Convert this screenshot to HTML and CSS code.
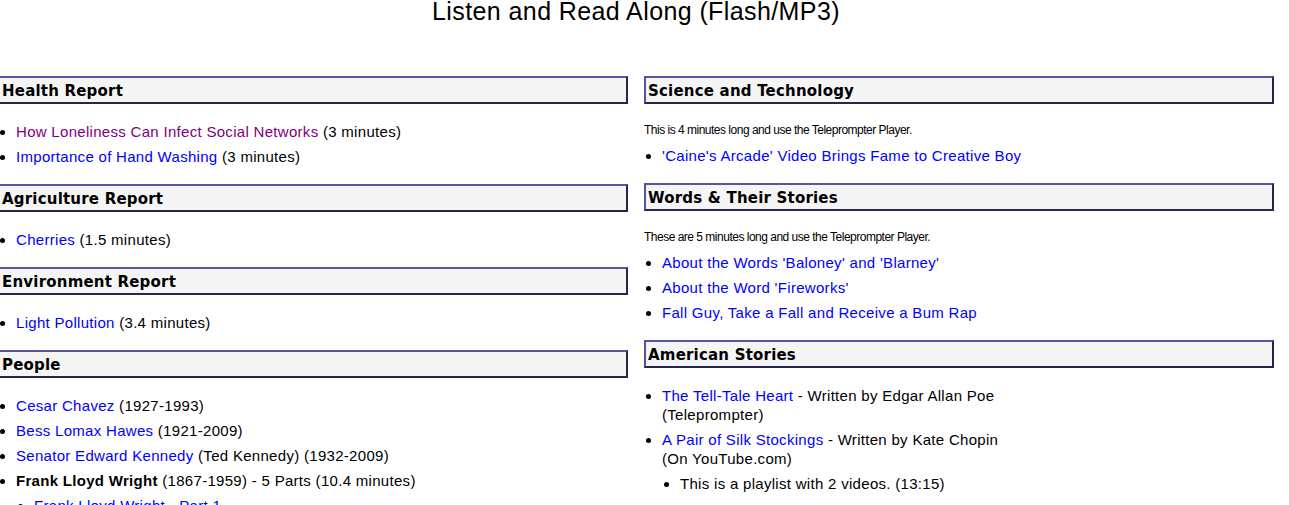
FILE: index.html
```html
<!DOCTYPE html>
<html lang="en">
<head>
<meta charset="utf-8">
<title>Listen and Read Along (Flash/MP3)</title>
<link rel="stylesheet" href="styles.css">
</head>
<body>
<div class="page">
  <h1 class="title">Listen and Read Along (Flash/MP3)</h1>
  <div class="columns">
    <div class="col">
      <h2 class="box">Health Report</h2>
      <ul class="list">
        <li><a class="visited" href="#">How Loneliness Can Infect Social Networks</a> (3 minutes)</li>
        <li><a href="#">Importance of Hand Washing</a> (3 minutes)</li>
      </ul>
      <h2 class="box">Agriculture Report</h2>
      <ul class="list">
        <li><a href="#">Cherries</a> (1.5 minutes)</li>
      </ul>
      <h2 class="box">Environment Report</h2>
      <ul class="list">
        <li><a href="#">Light Pollution</a> (3.4 minutes)</li>
      </ul>
      <h2 class="box">People</h2>
      <ul class="list">
        <li><a href="#">Cesar Chavez</a> (1927-1993)</li>
        <li><a href="#">Bess Lomax Hawes</a> (1921-2009)</li>
        <li><a href="#">Senator Edward Kennedy</a> (Ted Kennedy) (1932-2009)</li>
        <li><strong>Frank Lloyd Wright</strong> (1867-1959) - 5 Parts (10.4 minutes)
          <ul class="sub">
            <li><a href="#">Frank Lloyd Wright - Part 1</a></li>
            <li><a href="#">Frank Lloyd Wright - Part 2</a></li>
          </ul>
        </li>
      </ul>
    </div>
    <div class="col">
      <h2 class="box">Science and Technology</h2>
      <p class="note">This is 4 minutes long and use the Teleprompter Player.</p>
      <ul class="list after-note">
        <li><a href="#">'Caine's Arcade' Video Brings Fame to Creative Boy</a></li>
      </ul>
      <h2 class="box">Words &amp; Their Stories</h2>
      <p class="note">These are 5 minutes long and use the Teleprompter Player.</p>
      <ul class="list after-note">
        <li><a href="#">About the Words 'Baloney' and 'Blarney'</a></li>
        <li><a href="#">About the Word 'Fireworks'</a></li>
        <li><a href="#">Fall Guy, Take a Fall and Receive a Bum Rap</a></li>
      </ul>
      <h2 class="box">American Stories</h2>
      <ul class="list stories">
        <li><a href="#">The Tell-Tale Heart</a> - Written by Edgar Allan Poe (Teleprompter)</li>
        <li><a href="#">A Pair of Silk Stockings</a> - Written by Kate Chopin (On YouTube.com)
          <ul class="sub">
            <li>This is a playlist with 2 videos. (13:15)</li>
          </ul>
        </li>
      </ul>
    </div>
  </div>
</div>
</body>
</html>
```

FILE: styles.css
```css
html, body {
  margin: 0;
  padding: 0;
  background: #ffffff;
}

body {
  font-family: "Liberation Sans", Arial, sans-serif;
  font-size: 15px;
  color: #000000;
  overflow: hidden;
}

.page {
  width: 1276px;
  margin-left: -2px;
}

.title {
  margin: -3px 0 0 0;
  font-size: 25px;
  font-weight: normal;
  line-height: 28px;
  letter-spacing: 0.4px;
  text-align: center;
}

.columns {
  display: grid;
  grid-template-columns: 630px 630px;
  column-gap: 16px;
  margin-top: 51px;
  align-items: start;
}

.box {
  margin: 0;
  padding: 2px 2px 0 2px;
  font-family: "DejaVu Sans", Verdana, sans-serif;
  font-size: 15px;
  font-weight: bold;
  line-height: 22px;
  letter-spacing: 0.2px;
  background: #f5f5f5;
  border: 2px solid;
  border-color: #56569c #26264a #26264a #56569c;
}

.list {
  margin: 18px 0;
  padding: 0 0 0 18px;
  line-height: 19px;
  letter-spacing: 0.3px;
  list-style: disc;
}

.list li + li {
  margin-top: 6px;
}

.note {
  margin: 17px 0 0 0;
  font-size: 12px;
  line-height: 19px;
  letter-spacing: -0.5px;
}

.list.after-note {
  margin-top: 6px;
}

.stories > li {
  max-width: 352px;
}

.sub {
  margin: 6px 0 0 0;
  padding: 0 0 0 18px;
  list-style: disc;
}

a {
  color: #0000ff;
  text-decoration: none;
}

a.visited {
  color: #800080;
}
```
